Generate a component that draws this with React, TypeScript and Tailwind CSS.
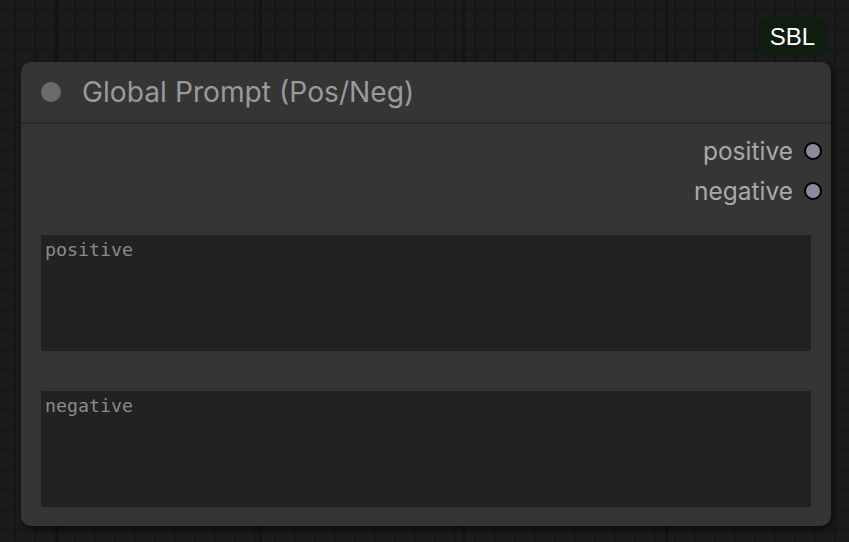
import React from "react";

function OutputRow({ label }: { label: string }) {
  return (
    <div className="flex h-[40px] items-center justify-end gap-[11px] pr-[9px]">
      <span className="text-[24.5px] text-[#a9a9a9]">{label}</span>
      <span className="h-[18px] w-[18px] rounded-full border-2 border-black bg-[#8b8a9c]" />
    </div>
  );
}

function PromptBox({ placeholder }: { placeholder: string }) {
  return (
    <textarea
      placeholder={placeholder}
      className="block h-[116px] w-full resize-none bg-[#222222] px-[4px] py-[3px] font-['DejaVu_Sans_Mono',monospace] text-[18.3px] leading-[24px] text-[#cccccc] outline-none placeholder:text-[#8a8a8a]"
    />
  );
}

export default function App() {
  return (
    <div className="h-[542px] w-full overflow-hidden bg-[#1b1b1b] bg-[linear-gradient(90deg,#141414_3px,transparent_3px),linear-gradient(#161616_2px,transparent_2px),linear-gradient(90deg,#161616_2px,transparent_2px)] bg-[size:203px_100%,20px_20px,20px_20px] bg-[position:56px_0,0_9px,14px_0] pl-[21px] pt-[62px] font-['Inter',sans-serif]">
      <div className="relative w-[810px] rounded-[10px] bg-[#353535] shadow-[2px_3px_6px_rgba(0,0,0,0.55)]">
        <div className="absolute -top-[45px] right-[4px] flex h-[39px] items-center rounded-[10px] bg-[#0e1d0f] px-[12px] font-['Liberation_Sans',sans-serif] text-[24px] text-white">
          SBL
        </div>

        <div className="flex h-[62px] items-center gap-[21px] border-b-2 border-[#2a2a2a] pl-[20px]">
          <span className="h-[20px] w-[20px] rounded-full bg-[#6a6a6a]" />
          <span className="text-[28.2px] text-[#9a9a9a]">Global Prompt (Pos/Neg)</span>
        </div>

        <div className="pt-[7px]">
          <OutputRow label="positive" />
          <OutputRow label="negative" />
        </div>

        <div className="flex flex-col gap-[40px] px-[20px] pb-[19px] pt-[24px]">
          <PromptBox placeholder="positive" />
          <PromptBox placeholder="negative" />
        </div>
      </div>
    </div>
  );
}
